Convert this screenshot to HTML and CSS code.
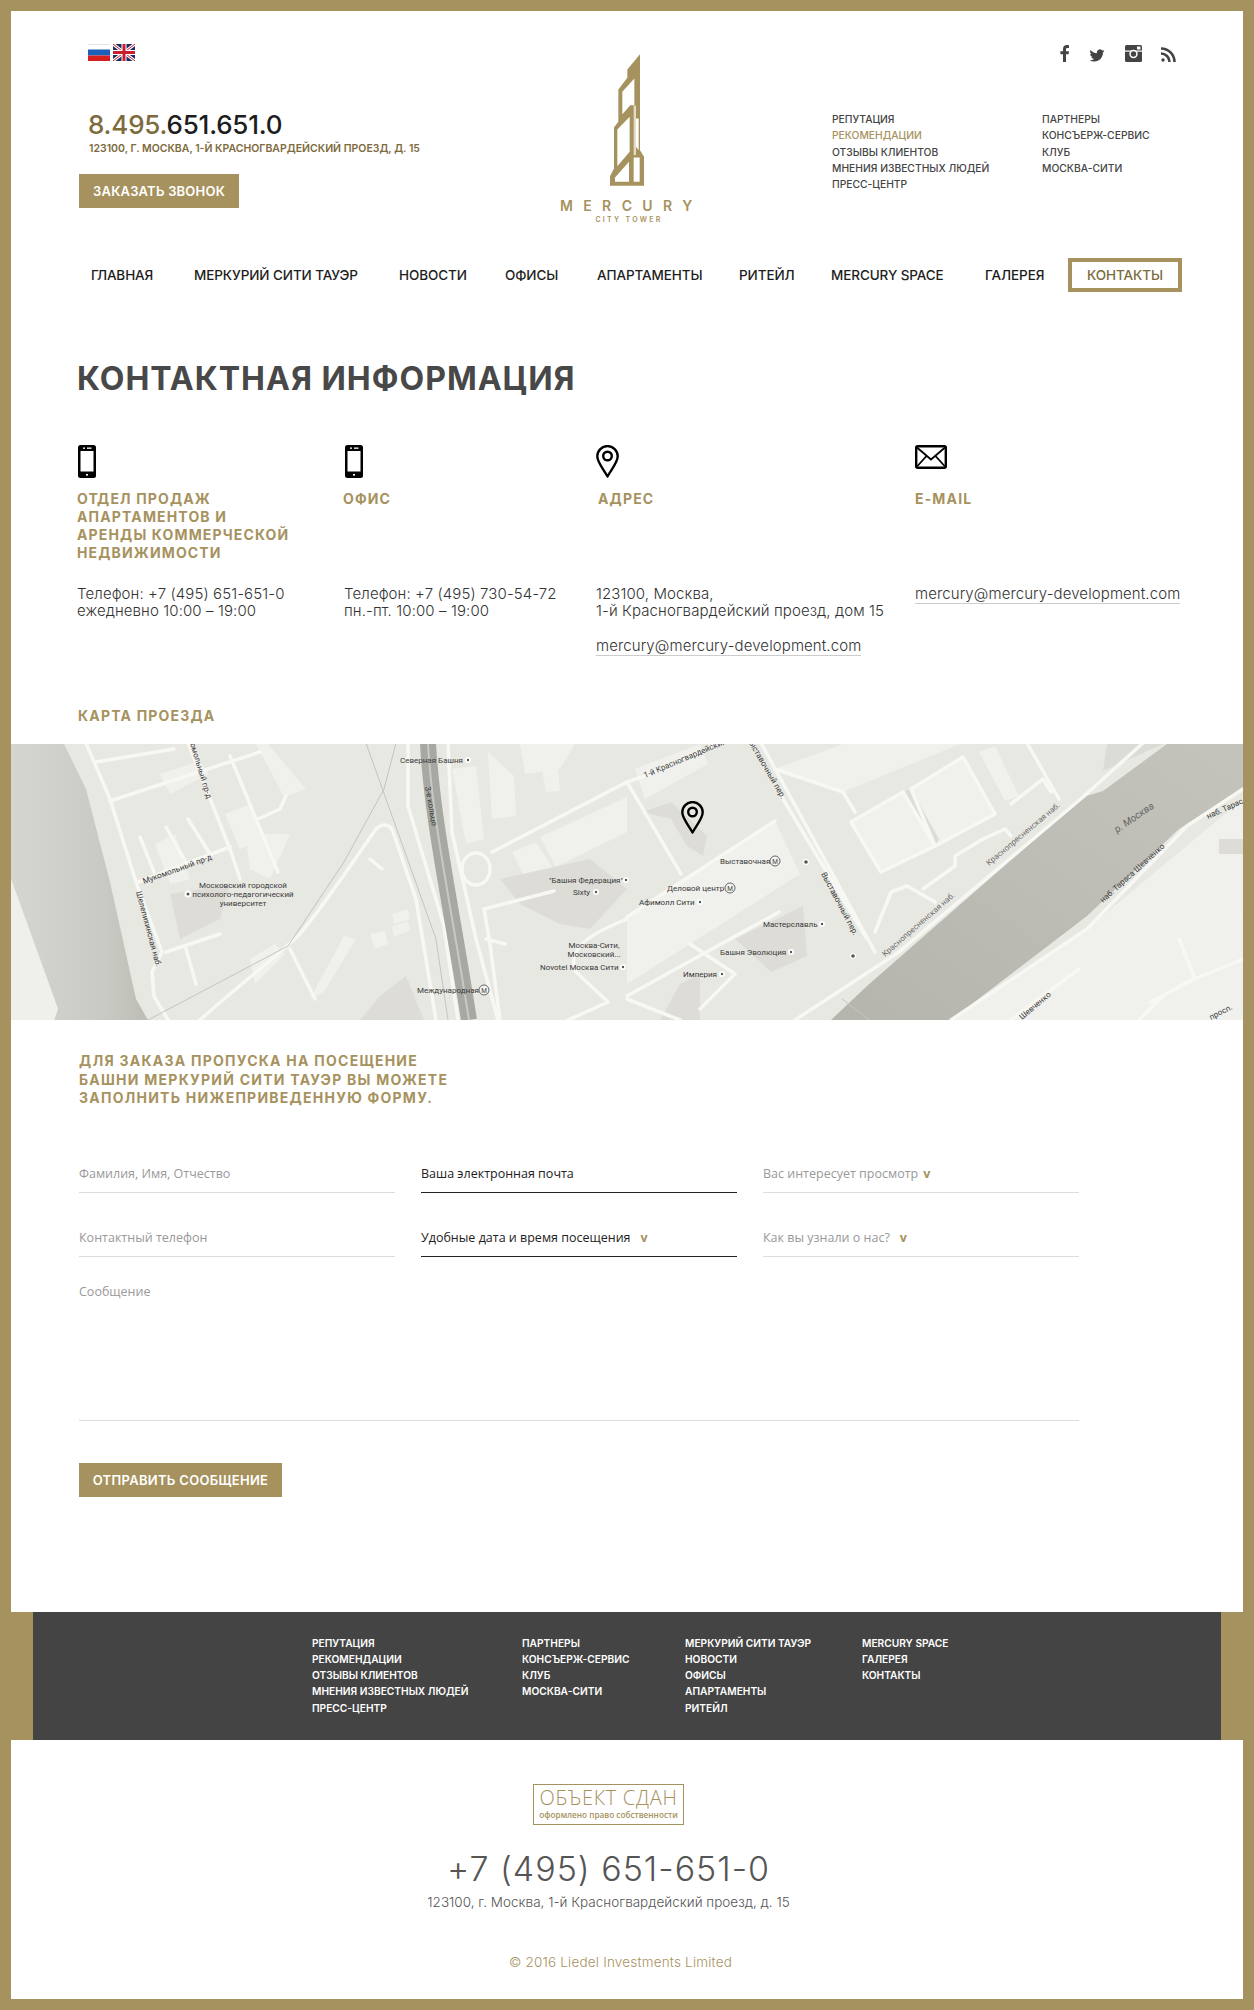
FILE: index.html
```html
<!DOCTYPE html>
<html lang="ru">
<head>
<meta charset="utf-8">
<title>Контактная информация</title>
<link rel="stylesheet" href="styles.css">
</head>
<body>
<svg class="defs" width="0" height="0" aria-hidden="true">
  <symbol id="pin" viewBox="0 0 23 33"><path d="M11.500 31.500C8 25 1.300 17.500 1.300 11.300A10.200 10.200 0 0 1 21.700 11.300C21.700 17.500 15 25 11.500 31.500Z" fill="none" stroke="#000" stroke-width="2.400" stroke-linejoin="round"/><circle cx="11.500" cy="11" r="4.300" fill="none" stroke="#000" stroke-width="2.400"/></symbol>
  <symbol id="mobile" viewBox="0 0 18 33"><rect width="18" height="33" rx="2.500" fill="#000"/><rect x="2.500" y="6" width="13" height="20.500" fill="#fff"/><rect x="5" y="2.500" width="2" height="1.300" fill="#fff"/><rect x="9" y="2.500" width="4.500" height="1.300" fill="#fff"/><rect x="8" y="29" width="2" height="1.600" fill="#fff"/></symbol>
</svg>
<div class="page">
  <header class="masthead">
    <div class="contact-box">
      <div class="flags">
        <svg class="flag" viewBox="0 0 22 17"><rect width="22" height="17" fill="#fff"/><rect y="5.500" width="22" height="6" fill="#1c5fb8"/><rect y="11.500" width="22" height="5.500" fill="#d6201f"/><rect width="22" height="1" fill="#e4e4e4"/></svg>
        <svg class="flag" viewBox="0 0 22 17"><rect width="22" height="17" fill="#1f2a66"/><path d="M0 0L22 17M22 0L0 17" stroke="#fff" stroke-width="3"/><path d="M0 0L22 17M22 0L0 17" stroke="#c8202f" stroke-width="1"/><path d="M11 0V17M0 8.500H22" stroke="#fff" stroke-width="5"/><path d="M11 0V17M0 8.500H22" stroke="#c8202f" stroke-width="3"/></svg>
      </div>
      <div class="hot-phone"><span class="hot-code">8.495.</span>651.651.0</div>
      <div class="hot-address">123100, Г. МОСКВА, 1-Й КРАСНОГВАРДЕЙСКИЙ ПРОЕЗД, Д. 15</div>
      <a class="btn btn-call">ЗАКАЗАТЬ ЗВОНОК</a>
    </div>
    <div class="logo">
      <svg class="tower" viewBox="213 42 102 395"><path fill="#a6925e" fill-rule="evenodd" d="M303 42L265 88V113L238 148V245L225 262V385L213 408V437H315V350L303 330ZM286 115L250 155V222L274 195H286ZM272 230L235 268V378L272 335ZM270 365L228 412V425H270ZM284 352H302V425H284Z"/><path fill="#e4dcc6" d="M284 196H291V345H284Z"/><path fill="#fff" d="M291 235H299V330L291 320Z"/></svg>
      <div class="logo-name">MERCURY</div>
      <div class="logo-sub">CITY TOWER</div>
    </div>
    <div class="side">
      <div class="social">
        <svg class="ico-f" viewBox="6 1 12 23" preserveAspectRatio="none"><path fill="#444" d="M14 24V13.500h3.500l.5-4H14V7c0-1.200.3-2 2-2h2.100V1.200C17.700 1.100 16.500 1 15.100 1 12 1 10 2.900 10 6.300v3.200H6.500v4H10V24z"/></svg>
        <svg class="ico-t" viewBox="0 0 24 24"><path fill="#444" d="M23.953 4.570a10 10 0 0 1-2.825.775 4.958 4.958 0 0 0 2.163-2.723c-.951.555-2.005.959-3.127 1.184a4.920 4.920 0 0 0-8.384 4.482C7.690 8.095 4.067 6.130 1.640 3.162a4.822 4.822 0 0 0-.666 2.475c0 1.710.870 3.213 2.188 4.096a4.904 4.904 0 0 1-2.228-.616v.060a4.923 4.923 0 0 0 3.946 4.827 4.996 4.996 0 0 1-2.212.085 4.936 4.936 0 0 0 4.604 3.417 9.867 9.867 0 0 1-6.102 2.105c-.39 0-.779-.023-1.170-.067a13.995 13.995 0 0 0 7.557 2.209c9.053 0 13.998-7.496 13.998-13.985 0-.21 0-.42-.015-.63A9.935 9.935 0 0 0 24 4.590z"/></svg>
        <svg class="ico-i" viewBox="0 0 17 17"><rect width="17" height="17" rx="1.500" fill="#444"/><rect y="5.500" width="17" height="1.200" fill="#fff"/><circle cx="8.500" cy="9" r="4.200" fill="#fff"/><circle cx="8.500" cy="9" r="2.700" fill="#444"/><rect x="12" y="1.500" width="3.500" height="3" fill="#fff"/></svg>
        <svg class="ico-r" viewBox="0 0 15 15"><circle cx="2" cy="13" r="1.700" fill="#444"/><path d="M0 6.500A8.500 8.500 0 0 1 8.500 15M0 1.500A13.500 13.500 0 0 1 13.500 15" fill="none" stroke="#444" stroke-width="2.600"/></svg>
      </div>
      <div class="side-links">
        <ul class="mini-list">
          <li>РЕПУТАЦИЯ</li><li class="is-current">РЕКОМЕНДАЦИИ</li><li>ОТЗЫВЫ КЛИЕНТОВ</li><li>МНЕНИЯ ИЗВЕСТНЫХ ЛЮДЕЙ</li><li>ПРЕСС-ЦЕНТР</li>
        </ul>
        <ul class="mini-list">
          <li>ПАРТНЕРЫ</li><li>КОНСЪЕРЖ-СЕРВИС</li><li>КЛУБ</li><li>МОСКВА-СИТИ</li>
        </ul>
      </div>
    </div>
  </header>

  <nav class="mainnav">
    <a>ГЛАВНАЯ</a><a>МЕРКУРИЙ СИТИ ТАУЭР</a><a>НОВОСТИ</a><a>ОФИСЫ</a><a>АПАРТАМЕНТЫ</a><a>РИТЕЙЛ</a><a>MERCURY SPACE</a><a>ГАЛЕРЕЯ</a><a class="nav-active">КОНТАКТЫ</a>
  </nav>

  <h1 class="page-title">КОНТАКТНАЯ ИНФОРМАЦИЯ</h1>

  <section class="contacts">
    <article class="contact">
      <svg class="c-ico c-mobile"><use href="#mobile"/></svg>
      <h3 class="c-head">ОТДЕЛ ПРОДАЖ<br>АПАРТАМЕНТОВ И<br>АРЕНДЫ КОММЕРЧЕСКОЙ<br>НЕДВИЖИМОСТИ</h3>
      <p class="c-text">Телефон: +7 (495) 651-651-0<br>ежедневно 10:00 – 19:00</p>
    </article>
    <article class="contact">
      <svg class="c-ico c-mobile"><use href="#mobile"/></svg>
      <h3 class="c-head c-head-tight">ОФИС</h3>
      <p class="c-text">Телефон: +7 (495) 730-54-72<br>пн.-пт. 10:00 – 19:00</p>
    </article>
    <article class="contact">
      <svg class="c-ico c-pin"><use href="#pin"/></svg>
      <h3 class="c-head c-head-indent">АДРЕС</h3>
      <p class="c-text">123100, Москва,<br>1-й Красногвардейский проезд, дом 15</p>
      <p class="c-text c-mail"><a>mercury@mercury-development.com</a></p>
    </article>
    <article class="contact">
      <svg class="c-ico c-env" viewBox="0 0 32 24"><rect x="1.200" y="1.200" width="29.600" height="21.600" rx="1.500" fill="none" stroke="#000" stroke-width="2.400"/><path d="M2 2.500L16 14.500L30 2.500M2 21.500L11.500 11M30 21.500L20.500 11" fill="none" stroke="#000" stroke-width="1.800"/></svg>
      <h3 class="c-head">E-MAIL</h3>
      <p class="c-text"><a>mercury@mercury-development.com</a></p>
    </article>
  </section>

  <h3 class="map-title">КАРТА ПРОЕЗДА</h3>

  <div class="map">
    <svg class="map-svg" viewBox="11 745 1232 276" preserveAspectRatio="none">
      <defs>
        <linearGradient id="riverA" x1="0" y1="0" x2="1" y2="0"><stop offset="0" stop-color="#d6d6d1"/><stop offset=".7" stop-color="#c9c9c3"/><stop offset="1" stop-color="#bdbdb6"/></linearGradient>
        <linearGradient id="riverB" x1="0" y1="1" x2="1" y2="0"><stop offset="0" stop-color="#b5b4ad"/><stop offset="1" stop-color="#c4c3bc"/></linearGradient>
      </defs>
      <rect x="11" y="745" width="1232" height="276" fill="#e8e8e3"/>
      <polygon fill="url(#riverA)" points="11,745 64,745 86,790 110,883 136,1000 148,1021 54,1021 58,1010 11,880"/>
      <polygon fill="#efefeb" points="11,880 58,1010 54,1021 11,1021"/>
      <polygon fill="url(#riverB)" points="1167,745 1243,745 1243,790 1179,830 1087,917 951,1021 831,1021 867,987 955,910 1083,798 1103,792"/>
      <polygon fill="#dcdcd6" points="1107,745 1163,745 1103,772"/>
      <g fill="#f0f0ec">
        <polygon points="256,745 268,745 306,790 284,798"/>
        <polygon points="344,937 356,940 324,993 310,1000"/>
        <polygon points="452,770 476,767 484,840 466,845"/>
        <polygon points="488,753 514,777 516,817 492,820"/>
        <polygon points="542,772 558,768 560,792 546,793"/>
        <polygon points="540,838 627,798 627,833 556,868"/>
        <polygon points="512,853 536,843 560,880 532,892"/>
        <polygon points="627,918 775,822 800,875 627,985"/>
        <polygon points="635,770 700,745 708,765 645,800"/>
        <polygon points="851,823 903,793 935,847 881,873"/>
        <polygon points="911,790 963,758 995,815 935,847"/>
        <polygon points="979,753 995,747 1019,797 1005,802"/>
        <polygon points="1087,930 1243,800 1243,1021 951,1021"/>
        <polygon points="520,745 575,745 560,770 525,775"/>
        <polygon points="775,770 843,745 960,745 843,793"/>
        <polygon points="392,915 408,910 410,920 394,925"/>
        <polygon points="392,928 408,922 410,931 394,938"/>
        <polygon points="370,935 385,932 388,945 375,950"/>
        <polygon points="245,835 290,835 270,880 250,870"/>
        <polygon points="160,775 200,762 208,775 170,795"/>
        <polygon points="225,815 250,805 262,840 240,850"/>
        <polygon points="155,845 175,835 190,880 170,885"/>
        <polygon points="250,960 275,945 285,955 255,985"/>
      </g>
      <g fill="#dddcd7">
        <polygon points="643,813 671,803 707,837 703,857 687,847 671,820"/>
        <polygon points="735,940 803,907 807,957 771,973"/>
        <polygon points="500,880 590,860 627,890 590,930 560,925 520,905"/>
        <polygon points="360,1021 380,997 406,977 424,1021"/>
        <polygon points="170,895 230,885 220,920 180,940"/>
        <polygon points="680,985 700,975 700,1021 660,1021"/>
        <polygon points="903,793 911,790 939,840 935,847"/>
        <polygon points="1219,840 1243,840 1243,855 1219,855"/>
      </g>
      <g fill="#f1f1ed">
        <polygon points="1175,870 1185,866 1193,885 1184,890"/>
        <polygon points="1190,905 1197,902 1201,925 1194,927"/>
        <polygon points="1156,945 1172,937 1176,945 1160,952"/>
        <polygon points="1230,910 1238,906 1241,914 1233,918"/>
        <polygon points="1214,965 1222,958 1226,965 1218,972"/>
      </g>
      <g fill="none" stroke="#f7f7f4" stroke-linecap="round" stroke-linejoin="round" stroke-width="3.500">
        <path d="M86,744L110,800L136,883L162,953L152,973L154,997L168,1021"/>
        <path d="M188,744L230,850L240,880"/>
        <path d="M230,848L138,883"/>
        <path d="M110,802L260,753"/>
        <path d="M96,763L174,750"/>
        <path d="M140,838L154,873M166,828L188,867M188,820L210,855"/>
        <path d="M230,757L278,873"/>
        <path d="M286,797L280,810L258,820"/>
        <path d="M200,1021C240,985 280,955 300,935C325,905 355,860 376,830Q385,822 392,830L416,900L436,1021"/>
        <path d="M166,953L220,935M196,985L186,950"/>
        <path d="M370,860L382,870M290,950L315,1000"/>
        <path d="M408,744L408,807L444,927L458,1021"/>
        <path d="M448,744L452,833L476,940L498,1021"/>
        <ellipse cx="476" cy="870" rx="14" ry="16"/>
        <path d="M492,853L627,783L645,777L719,744"/>
        <path d="M484,910L554,892"/>
        <path d="M484,910L490,945L500,1021M486,940L505,945"/>
        <path d="M627,920Q590,935 580,947Q570,960 576,973L608,1003L568,1021"/>
        <path d="M627,918L775,822"/>
        <path d="M627,783L681,875"/>
        <path d="M627,997L779,913"/>
        <path d="M761,744L875,953"/>
        <path d="M780,795L867,940"/>
        <path d="M795,1021L899,953L1083,798L1143,744"/>
        <path d="M851,823L903,793L935,847L881,873Z"/>
        <path d="M911,790L963,758L995,815L935,847Z"/>
        <path d="M775,770L843,793L855,813"/>
        <path d="M1027,744L1059,800"/>
        <path d="M1011,805L1043,780L1051,793"/>
        <path d="M875,933L891,893L907,887L935,903"/>
        <path d="M923,890L955,867L955,857L983,840L1005,830L1011,837"/>
        <path d="M951,1021L1087,930L1187,827L1243,790"/>
        <path d="M1179,940L1195,980L1151,1003M1163,997L1187,983L1243,960M1139,1021L1163,997M1079,970L1011,1021"/>
        <path d="M690,945L735,975L700,1010M627,1000L680,1021"/>
      </g>
      <path d="M148,1021L288,947L344,863L384,790L396,744M366,744L436,940L448,1021M842,1000L870,1021" fill="none" stroke="#c4c4be" stroke-width="1"/>
      <path d="M428,744C432,820 450,900 469,1021" fill="none" stroke="#a8a8a2" stroke-width="16"/>
      <path d="M428,744C432,820 450,900 469,1021" fill="none" stroke="#c9c9c3" stroke-width="2"/>
      <g class="map-labels">
        <text x="400" y="764">Северная Башня</text>
        <text transform="translate(425,788) rotate(80)">3-е кольцо</text>
        <text transform="translate(190,745) rotate(73)">омольный пр-д</text>
        <text transform="translate(144,885) rotate(-20)">Мукомольный пр-д</text>
        <text transform="translate(136,893) rotate(75)">Шелепихинская наб.</text>
        <text class="mid" x="243" y="889">Московский городской</text>
        <text class="mid" x="243" y="898">психолого-педагогический</text>
        <text class="mid" x="243" y="907">университет</text>
        <text x="549" y="884">"Башня Федерация"</text>
        <text x="573" y="896">Sixty</text>
        <text class="mid" x="594" y="949">Москва-Сити,</text>
        <text class="mid" x="594" y="958">Московский...</text>
        <text x="540" y="971">Novotel Москва Сити</text>
        <text x="417" y="994">Международная</text>
        <text transform="translate(645,779) rotate(-23)">1-й Красногвардейский</text>
        <text transform="translate(749,744) rotate(60)">ыставочный пер.</text>
        <text x="720" y="865">Выставочная</text>
        <text x="667" y="892">Деловой центр</text>
        <text x="639" y="906">Афимолл Сити</text>
        <text x="763" y="928">Мастерславль</text>
        <text x="720" y="956">Башня Эволюция</text>
        <text x="683" y="978">Империя</text>
        <text transform="translate(821,875) rotate(62)">Выставочный пер.</text>
        <text class="soft" transform="translate(885,958) rotate(-41)">Краснопресненская наб.</text>
        <text class="soft" transform="translate(989,867) rotate(-40)">Краснопресненская наб.</text>
        <text class="river" transform="translate(1117,834) rotate(-34)">р. Москва</text>
        <text transform="translate(1103,904) rotate(-42)">наб. Тараса Шевченко</text>
        <text transform="translate(1208,820) rotate(-24)">наб. Тарас</text>
        <text transform="translate(1022,1021) rotate(-40)">Шевченко</text>
        <text transform="translate(1211,1021) rotate(-27)">просп.</text>
      </g>
      <g fill="#fff">
        <circle cx="468" cy="761" r="3"/><circle cx="626" cy="881" r="3"/><circle cx="596" cy="893" r="3"/><circle cx="188" cy="895" r="3.500"/><circle cx="700" cy="903" r="3"/><circle cx="822" cy="925" r="3"/><circle cx="791" cy="953" r="3"/><circle cx="722" cy="975" r="3"/><circle cx="623" cy="968" r="3"/><circle cx="806" cy="863" r="3"/><circle cx="853" cy="957" r="3"/>
      </g>
      <g fill="#555">
        <circle cx="468" cy="761" r="1.200"/><circle cx="626" cy="881" r="1.200"/><circle cx="596" cy="893" r="1.200"/><circle cx="188" cy="895" r="1.500"/><circle cx="700" cy="903" r="1.200"/><circle cx="822" cy="925" r="1.200"/><circle cx="791" cy="953" r="1.200"/><circle cx="722" cy="975" r="1.200"/><circle cx="623" cy="968" r="1.200"/><circle cx="806" cy="863" r="1.800"/><circle cx="853" cy="957" r="1.800"/>
      </g>
      <g fill="#f4f4f1" stroke="#555" stroke-width=".9">
        <circle cx="484" cy="991" r="5"/><circle cx="775" cy="862" r="5"/><circle cx="730" cy="889" r="5"/>
      </g>
      <g class="map-metro">
        <text x="484" y="993.500">М</text><text x="775" y="864.500">М</text><text x="730" y="891.500">М</text>
      </g>
      <use href="#pin" x="681" y="802" width="23" height="33"/>
    </svg>
  </div>

  <h3 class="form-title">ДЛЯ ЗАКАЗА ПРОПУСКА НА ПОСЕЩЕНИЕ<br>БАШНИ МЕРКУРИЙ СИТИ ТАУЭР ВЫ МОЖЕТЕ<br>ЗАПОЛНИТЬ НИЖЕПРИВЕДЕННУЮ ФОРМУ.</h3>

  <form class="order-form">
    <div class="field">Фамилия, Имя, Отчество</div>
    <div class="field field-dark">Ваша электронная почта</div>
    <div class="field">Вас интересует просмотр<span class="chev chev-near">v</span></div>
    <div class="field">Контактный телефон</div>
    <div class="field field-dark">Удобные дата и время посещения<span class="chev">v</span></div>
    <div class="field">Как вы узнали о нас?<span class="chev">v</span></div>
    <div class="field field-message">Сообщение</div>
  </form>
  <a class="btn btn-send">ОТПРАВИТЬ СООБЩЕНИЕ</a>

  <div class="foot-band">
    <div class="foot-menu">
      <ul class="foot-list foot-a"><li>РЕПУТАЦИЯ</li><li>РЕКОМЕНДАЦИИ</li><li>ОТЗЫВЫ КЛИЕНТОВ</li><li>МНЕНИЯ ИЗВЕСТНЫХ ЛЮДЕЙ</li><li>ПРЕСС-ЦЕНТР</li></ul>
      <ul class="foot-list foot-b"><li>ПАРТНЕРЫ</li><li>КОНСЪЕРЖ-СЕРВИС</li><li>КЛУБ</li><li>МОСКВА-СИТИ</li></ul>
      <ul class="foot-list foot-c"><li>МЕРКУРИЙ СИТИ ТАУЭР</li><li>НОВОСТИ</li><li>ОФИСЫ</li><li>АПАРТАМЕНТЫ</li><li>РИТЕЙЛ</li></ul>
      <ul class="foot-list"><li>MERCURY SPACE</li><li>ГАЛЕРЕЯ</li><li>КОНТАКТЫ</li></ul>
    </div>
  </div>

  <footer class="foot">
    <div class="badge"><div class="badge-main">ОБЪЕКТ СДАН</div><div class="badge-sub">оформлено право собственности</div></div>
    <div class="foot-phone">+7 (495) 651-651-0</div>
    <div class="foot-address">123100, г. Москва, 1-й Красногвардейский проезд, д. 15</div>
    <div class="foot-copy">© 2016 Liedel Investments Limited</div>
  </footer>
</div>
</body>
</html>
```
FILE: styles.css
```css
* { box-sizing: border-box; }
html, body { margin: 0; padding: 0; }
body { font-family: Inter, "Open Sans", sans-serif; color: #444; background: #fff; }
ul { list-style: none; margin: 0; padding: 0; }
h1, h3, p { margin: 0; }
.defs { position: absolute; }

.page { width: 1254px; height: 2010px; border: 11px solid #a6925e; background: #fff; overflow: hidden; }

.masthead { display: grid; grid-template-columns: 1fr 150px 1fr; height: 247px; }
.contact-box { padding: 33px 0 0 68px; }
.flags { display: flex; gap: 3px; margin-left: 9px; }
.flag { width: 22px; height: 17px; display: block; }
.hot-phone { margin: 49px 0 0 9px; font-size: 26px; line-height: 30px; font-weight: 500; color: #1d1d1d; letter-spacing: -.2px; white-space: nowrap; }
.hot-code { color: #7d6b3d; }
.hot-address { margin: 2px 0 0 10px; font-size: 10.500px; line-height: 14px; font-weight: 600; color: #7d6b3d; white-space: nowrap; letter-spacing: 0; }
.btn { display: flex; align-items: center; justify-content: center; height: 34px; background: #a6925e; color: #fff; font-size: 13px; font-weight: 600; white-space: nowrap; }
.btn-call { width: 160px; margin-top: 18px; letter-spacing: .2px; }

.logo { padding-top: 43px; display: flex; flex-direction: column; align-items: center; color: #a6925e; }
.tower { width: 34px; height: 132px; display: block; }
.logo-name { margin-top: 13px; font-size: 14px; line-height: 14px; font-weight: 600; letter-spacing: 10.400px; margin-right: -8.500px; white-space: nowrap; }
.logo-sub { margin: 2px 0 0 4px; font-size: 7px; line-height: 9px; font-weight: 600; letter-spacing: 2.300px; white-space: nowrap; }

.side { padding-top: 34px; }
.social { display: flex; justify-content: flex-end; align-items: flex-start; gap: 19px; padding-right: 67px; height: 17px; }
.ico-f { width: 9px; height: 17px; margin-top: 0; }
.ico-t { width: 18px; height: 15px; margin-top: 3px; }
.ico-i { width: 17px; height: 17px; }
.ico-r { width: 15px; height: 15px; margin-top: 2px; }
.side-links { display: grid; grid-template-columns: 210px 1fr; margin: 49px 0 0 130px; }
.mini-list li { font-size: 10.300px; line-height: 16.300px; font-weight: 500; color: #444; white-space: nowrap; }
.mini-list .is-current { color: #a6925e; }

.mainnav { display: grid; grid-template-columns: 103px 205px 106px 92px 142px 92px 154px 83px 114px; align-items: center; height: 34px; padding-left: 80px; font-size: 13.500px; font-weight: 500; color: #1d1d1d; white-space: nowrap; letter-spacing: -.1px; }
.nav-active { display: flex; align-items: center; justify-content: center; height: 34px; border: 4px solid #a6925e; color: #7d6b3d; }

.page-title { margin: 67px 0 0 66px; font-size: 32px; line-height: 40px; font-weight: 700; color: #484848; white-space: nowrap; letter-spacing: 1px; }

.contacts { display: grid; grid-template-columns: 267px 252px 319px 1fr; padding-left: 66px; margin-top: 46px; height: 262px; }
.c-ico { display: block; height: 33px; margin-bottom: 12px; }
.c-mobile { width: 18px; margin-left: 1px; }
.c-pin { width: 23px; }
.c-env { width: 32px; height: 24px; margin-bottom: 21px; }
.c-head { min-height: 72px; font-size: 14px; line-height: 18px; font-weight: 700; letter-spacing: 1.150px; color: #a6925e; white-space: nowrap; }
.c-head-tight { margin-left: -1px; }
.c-head-indent { padding-left: 2px; }
.c-text { margin-top: 23px; padding-bottom: 3px; font-size: 15px; line-height: 17px; font-weight: 300; letter-spacing: .1px; color: #333; white-space: nowrap; }
.c-mail { margin-top: 15px; }
.c-text a { border-bottom: 1px solid #ccc; }

.map-title { margin-left: 67px; font-size: 14px; line-height: 18px; font-weight: 700; letter-spacing: 1.200px; color: #a6925e; }
.map { height: 276px; margin-top: 19px; }
.map-svg { display: block; width: 1232px; height: 276px; }
.map-labels text { font-family: Roboto, sans-serif; font-size: 8px; fill: #3a3a3a; }
.map-labels .mid { text-anchor: middle; }
.map-labels .soft { fill: #6e6e6e; }
.map-labels .river { font-style: italic; font-size: 10px; fill: #666; }
.map-metro text { font-family: Roboto, sans-serif; font-size: 6.500px; fill: #444; text-anchor: middle; }

.form-title { margin: 32px 0 0 68px; font-size: 14px; line-height: 18.500px; font-weight: 700; letter-spacing: 1.250px; color: #a6925e; white-space: nowrap; }
.order-form { display: grid; grid-template-columns: repeat(3, 316px); column-gap: 26px; row-gap: 34px; margin: 55px 0 0 68px; width: 1000px; font-family: "Open Sans", sans-serif; }
.field { height: 30px; padding-top: 1px; line-height: 20px; font-size: 12.500px; color: #999; border-bottom: 1px solid #ddd; white-space: nowrap; }
.field-dark { color: #222; border-bottom-color: #222; }
.chev { margin-left: 10px; color: #a6925e; font-weight: 700; }
.chev-near { margin-left: 5px; }
.field-message { grid-column: 1 / -1; height: 139px; margin-top: -9px; padding-top: 0; }

.btn-send { width: 203px; margin: 42px 0 0 68px; letter-spacing: .3px; }

.foot-band { background: #a6925e; padding: 0 22px; margin-top: 115px; }
.foot-menu { display: flex; height: 128px; padding: 23px 0 0 279px; background: #444; }
.foot-list li { font-size: 10.200px; line-height: 16.300px; font-weight: 600; color: #fff; white-space: nowrap; }
.foot-a { width: 210px; }
.foot-b { width: 163px; }
.foot-c { width: 177px; }

.foot { display: flex; flex-direction: column; align-items: center; padding: 44px 37px 0 0; }
.badge { width: 151px; height: 41px; border: 1.500px solid #a6925e; color: #a6925e; text-align: center; font-family: "Open Sans", sans-serif; }
.badge-main { font-size: 20px; line-height: 23px; margin-top: 1px; font-weight: 300; letter-spacing: .7px; white-space: nowrap; }
.badge-sub { font-size: 8.200px; line-height: 11px; font-weight: 600; white-space: nowrap; }
.foot-phone { margin-top: 24px; font-size: 34px; line-height: 40px; font-weight: 300; letter-spacing: 1px; color: #555; white-space: nowrap; }
.foot-address { margin-top: 5px; font-size: 13.500px; line-height: 16px; font-weight: 300; color: #555; white-space: nowrap; }
.foot-copy { margin: 44px 0 0 24px; font-size: 13.500px; line-height: 16px; font-weight: 300; letter-spacing: .2px; color: #a6925e; white-space: nowrap; }
```
